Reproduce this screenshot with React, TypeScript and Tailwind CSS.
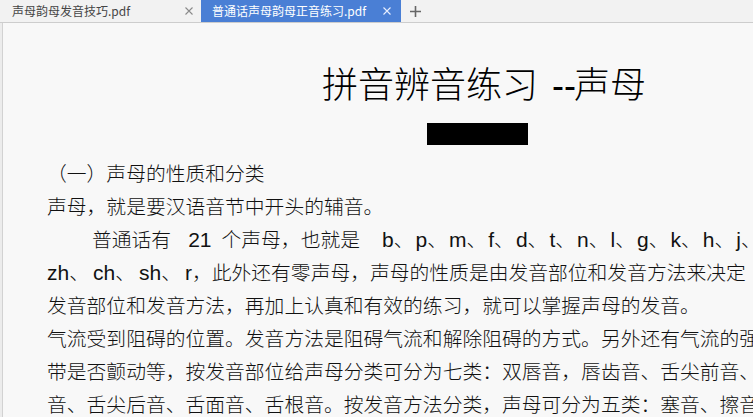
const cjk = "font-['Noto_Sans_CJK_SC',sans-serif]";
const lat = "font-['Liberation_Sans','Noto_Sans_CJK_SC',sans-serif] text-[21px]";

function Close({ color }: { color: string }) {
  return (
    <svg viewBox="0 0 8 8" className="h-[8px] w-[8px]" fill="none" stroke={color} strokeWidth="1.1">
      <path d="M0.5 0.5l7 7M7.5 0.5l-7 7" />
    </svg>
  );
}

function Line({ children, indent = false }: { children: React.ReactNode; indent?: boolean }) {
  return (
    <div className={`h-[33px] whitespace-nowrap leading-[33px] ${indent ? "pl-[45px]" : ""}`}>{children}</div>
  );
}

const initials = ["b", "p", "m", "f", "d", "t", "n", "l", "g", "k", "h", "j"];

export default function App() {
  return (
    <div className={`h-[417px] w-[753px] overflow-hidden bg-[#ececec] ${cjk}`}>
      <div className="flex h-[23px] border-b border-[#cdcdcd] bg-[#f2f2f2] text-[12px] leading-[22px]">
        <div className="flex w-[201px] items-center justify-between pl-[12px] pr-[8px] text-[#454545]">
          <span>声母韵母发音技巧.pdf</span>
          <Close color="#8a8a8a" />
        </div>
        <div className="flex w-[200px] items-center justify-between bg-[#4a7fd5] pl-[11px] pr-[10px] text-white">
          <span>普通话声母韵母正音练习.pdf</span>
          <Close color="#e8efff" />
        </div>
        <div className="flex items-center pl-[9px]">
          <svg viewBox="0 0 11 11" className="h-[11px] w-[11px]" fill="none" stroke="#666" strokeWidth="1.6">
            <path d="M5.5 0v11M0 5.5h11" />
          </svg>
        </div>
      </div>

      <div className="ml-[2px] h-full overflow-hidden border-l border-[#d2d2d2] bg-[#f8f8f8] font-light text-[#111]">
        <div className="mt-[41px] h-[36px] whitespace-nowrap pl-[319px] text-[36px] leading-[36px] text-black">
          拼音辨音练习
          <span className="ml-[14px] -mr-[2px] font-['Liberation_Sans',sans-serif] font-normal">--</span>
          声母
        </div>
        <div className="ml-[424px] mt-[23px] h-[22px] w-[101px] bg-black" />

        <div className="mt-[11px] pl-[44px] text-[19.8px]">
          <Line>（一）声母的性质和分类</Line>
          <Line>声母，就是要汉语音节中开头的辅音。</Line>
          <Line indent>
            普通话有
            <span className={`${lat} ml-[17px] mr-[10px]`}>21</span>
            个声母，也就是
            <span className="ml-[22px]">
              {initials.map((c, i) => (
                <span key={c}>
                  <span className={`${lat} ${i > 0 ? "ml-[2px]" : ""}`}>{c}</span>、
                </span>
              ))}
            </span>
          </Line>
          <Line>
            {["zh", "ch", "sh"].map((c, i) => (
              <span key={c}>
                <span className={`${lat} ${i > 0 ? "ml-[4px]" : ""}`}>{c}</span>、
              </span>
            ))}
            <span className={`${lat} ml-[4px]`}>r</span>，此外还有零声母，声母的性质是由发音部位和发音方法来决定
          </Line>
          <Line>发音部位和发音方法，再加上认真和有效的练习，就可以掌握声母的发音。</Line>
          <Line>气流受到阻碍的位置。发音方法是阻碍气流和解除阻碍的方式。另外还有气流的强</Line>
          <Line>带是否颤动等，按发音部位给声母分类可分为七类：双唇音，唇齿音、舌尖前音、</Line>
          <Line>音、舌尖后音、舌面音、舌根音。按发音方法分类，声母可分为五类：塞音、擦音</Line>
        </div>
      </div>
    </div>
  );
}
